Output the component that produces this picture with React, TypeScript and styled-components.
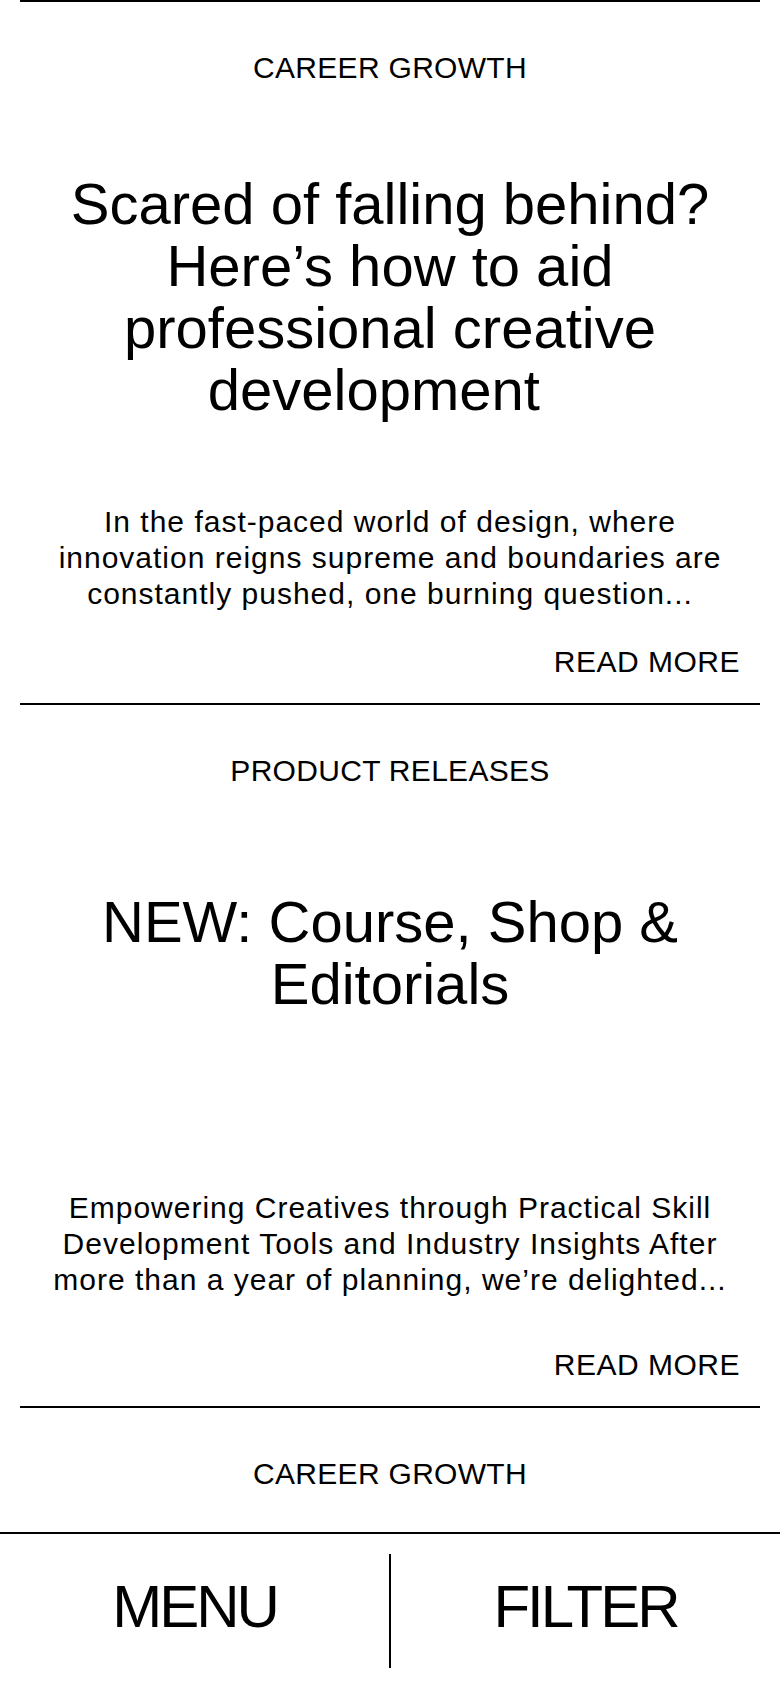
import styled, { createGlobalStyle } from 'styled-components';

interface Post {
  category: string;
  title?: string;
  excerpt?: string;
  titleGap?: number;
  excerptGap?: number;
}

const posts: Post[] = [
  {
    category: 'Career Growth',
    title:
      'Scared of falling behind? Here\u2019s how to aid professional creative development\u00a0\u00a0',
    excerpt:
      'In the fast-paced world of design, where innovation reigns supreme and boundaries are constantly pushed, one burning question...',
    titleGap: 87,
    excerptGap: 32,
  },
  {
    category: 'Product Releases',
    title: 'NEW: Course, Shop & Editorials',
    excerpt:
      'Empowering Creatives through Practical Skill Development Tools and Industry Insights After more than a year of planning, we\u2019re delighted...',
    titleGap: 102,
    excerptGap: 49,
  },
  {
    category: 'Career Growth',
  },
];

const GlobalStyle = createGlobalStyle`
  html, body {
    margin: 0;
    padding: 0;
    background: #fff;
  }

  body {
    font-family: 'Liberation Sans', Arial, sans-serif;
    color: #000;
    -webkit-font-smoothing: antialiased;
  }
`;

const Page = styled.div`
  height: 100vh;
  display: flex;
  flex-direction: column;
  overflow: hidden;
`;

const Feed = styled.main`
  flex: 1;
  min-height: 0;
  overflow: hidden;
  padding: 0 20px;
`;

const Article = styled.article`
  height: 703px;
  box-sizing: border-box;
  border-top: 2px solid #000;
  padding: 48px 20px 23px;
  display: flex;
  flex-direction: column;
  text-align: center;
`;

const Category = styled.div`
  font-size: 30px;
  line-height: 36px;
  letter-spacing: 0.3px;
  text-transform: uppercase;
`;

const Title = styled.h2<{ $gap: number }>`
  margin: ${(props) => props.$gap}px 0 0;
  font-size: 58px;
  font-weight: 400;
  line-height: 62px;
`;

const Excerpt = styled.p<{ $gap: number }>`
  margin: auto 0 ${(props) => props.$gap}px;
  font-size: 30px;
  line-height: 36px;
  letter-spacing: 1px;
`;

const ReadMore = styled.a`
  align-self: flex-end;
  font-size: 30px;
  line-height: 36px;
  letter-spacing: 0.5px;
  text-transform: uppercase;
  color: inherit;
  text-decoration: none;
  cursor: pointer;
`;

const BottomBar = styled.nav`
  flex-shrink: 0;
  height: 156px;
  box-sizing: border-box;
  border-top: 2px solid #000;
  padding: 20px 0;
  display: grid;
  grid-template-columns: 1fr 2px 1fr;
  background: #fff;
`;

const BarButton = styled.button`
  border: none;
  background: none;
  padding: 0 0 8px;
  font-family: inherit;
  font-size: 60px;
  line-height: 1;
  letter-spacing: -3px;
  color: #000;
  text-transform: uppercase;
  cursor: pointer;
`;

const BarDivider = styled.span`
  background: #000;
`;

const App: React.FC = () => {
  return (
    <Page>
      <GlobalStyle />
      <Feed>
        {posts.map((post, i) => (
          <Article key={i}>
            <Category>{post.category}</Category>
            {post.title && <Title $gap={post.titleGap ?? 0}>{post.title}</Title>}
            {post.excerpt && <Excerpt $gap={post.excerptGap ?? 0}>{post.excerpt}</Excerpt>}
            {post.title && <ReadMore>Read more</ReadMore>}
          </Article>
        ))}
      </Feed>
      <BottomBar>
        <BarButton>Menu</BarButton>
        <BarDivider />
        <BarButton>Filter</BarButton>
      </BottomBar>
    </Page>
  );
};

export default App;
